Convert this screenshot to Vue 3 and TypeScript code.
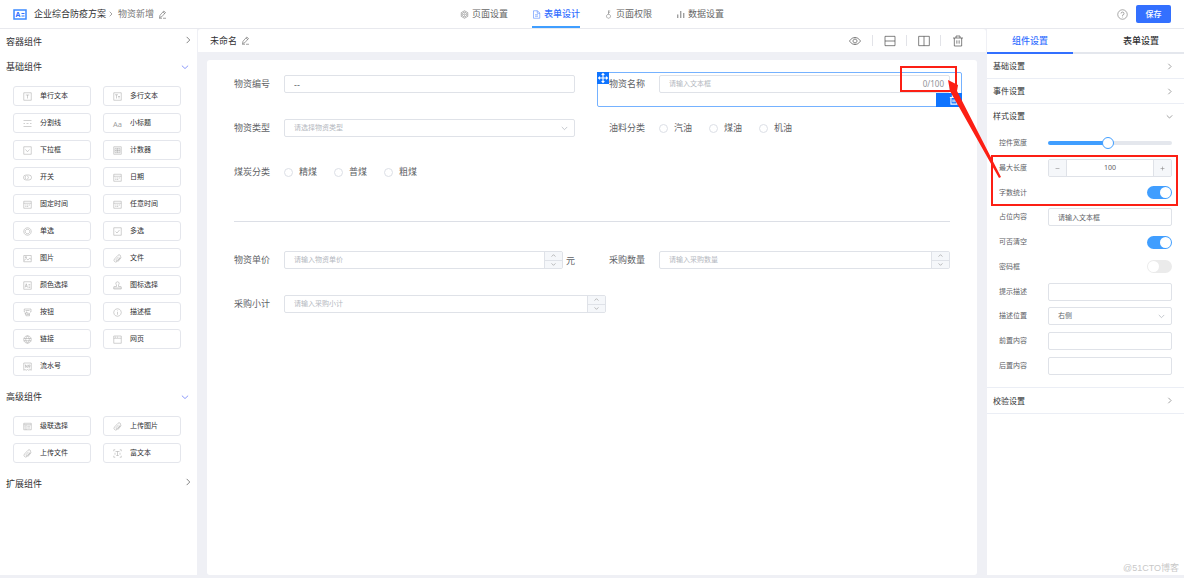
<script setup lang="ts">
import { ref } from 'vue'

interface Glyph { d: string; text?: string; x?: number; y?: number; size?: number }
interface Item { label: string; icon: string }
interface Group { title: string; open: boolean; items: Item[] }

const frame = 'M1.5 1.5h15v15h-15z'
const calendar = 'M1.5 2.5h15v14h-15zM1.5 6.5h15M4.5 10h2.5M8 10h2.5M11.500 10h2.500M4.500 13h2.500M8 13h2.500'
const clip = 'M14.500 7.500l-6.500 7.500a3.500 3.500 0 0 1-5-5l7-7.500a2.700 2.700 0 0 1 4.500 4l-6 6.500a1.400 1.400 0 0 1-2.300-2l5-5.500M16.500 7l-7 8.500'

const glyphs: Record<string, Glyph> = {
  input: { d: frame + 'M5.500 6h7M9 6v7' },
  textarea: { d: frame + 'M4 5.500h6M7 5.500v7.500M10 9h4M12 9v4' },
  divider: { d: 'M1 3h16M1 9h3M7 9h4M14 9h3M1 15h16' },
  heading: { d: '', text: 'Aa', x: 0, y: 15, size: 15 },
  select: { d: frame + 'M5 7l4 4.500 4-4.500' },
  counter: { d: frame + 'M4 4.500h10v9h-10zM4 9h10M9 4.500v9M6 6.800h1.500M11 6.800h1.500M6 11.300h1.500M11 11.300h1.500' },
  toggle: { d: 'M6 4h6a5 5 0 0 1 0 10h-6a5 5 0 0 1 0-10zM9 5.500a5 5 0 0 1 0 7M6.500 5.500a4 4 0 0 0 0 7' },
  calendar: { d: calendar },
  radio: { d: 'M9 1.500a7.500 7.500 0 1 0 .01 0zM9 4.500a4.500 4.500 0 1 0 .01 0z' },
  check: { d: frame + 'M5 9l3 3 5-6' },
  image: { d: 'M1.500 3h15v12.500h-15zM2 13l4.500-4 3.500 3 3-3.500 3.500 2M4.500 5.500h2.500v1.500h-2.500z' },
  clip: { d: clip },
  color: { d: frame + 'M4 13l2.500-7.500 2.500 7.500M5 10.500h3M11 7h3.500M11 10h3.500M11 13h3.500' },
  stamp: { d: 'M9 1.500a3.500 3.500 0 0 1 2 6.300v3.200h4.500q1 0 1 1v4h-15v-4q0-1 1-1h4.500v-3.200a3.500 3.500 0 0 1 2-6.300M1.500 14h15' },
  button: { d: 'M4 8h-1.500v-6h13.500v6h-2M5 5h8M6 15.500l-2-5 2 .8v-3.300h2v2.500h5v5zM6.500 13h6' },
  info: { d: 'M9 1.500a7.500 7.500 0 1 0 .01 0zM9 5v1.500M9 8v5.500' },
  globe: { d: 'M9 1.500a7.500 7.500 0 1 0 .01 0zM1.500 7h15M1.500 11.500h15M9 1.500q-7 7.500 0 15q7-7.500 0-15' },
  page: { d: 'M1.500 2h15v14.500h-15zM1.500 6.500h15M4 4.300h2M8 4.300h2' },
  serial: { d: 'M1.500 16.500v-14.500h15v14.500l-2.500-1.500-2.500 1.500-2.500-1.500-2.500 1.500-2.500-1.500zM5 11.500v-6l3.500 6v-6M11 6h3v3h-3zM11 11.500h3' },
  cascade: { d: 'M1.500 2.500h15v13h-15zM1.500 5.500h15M6 5.500v10M8.500 8.500h5.500M8.500 12h5.500M3 8.500h1.500M3 12h1.500' },
  rich: { d: 'M1.500 4.500v-3h3M13.500 1.500h3v3M16.500 13.500v3h-3M4.500 16.500h-3v-3M5 5h8M9 5v8M6.500 13h5M4 7.500v4M14 7.500v4' }
}

const groups = ref<Group[]>([
  { title: '容器组件', open: false, items: [] },
  {
    title: '基础组件', open: true, items: [
      { label: '单行文本', icon: 'input' }, { label: '多行文本', icon: 'textarea' },
      { label: '分割线', icon: 'divider' }, { label: '小标题', icon: 'heading' },
      { label: '下拉框', icon: 'select' }, { label: '计数器', icon: 'counter' },
      { label: '开关', icon: 'toggle' }, { label: '日期', icon: 'calendar' },
      { label: '固定时间', icon: 'calendar' }, { label: '任意时间', icon: 'calendar' },
      { label: '单选', icon: 'radio' }, { label: '多选', icon: 'check' },
      { label: '图片', icon: 'image' }, { label: '文件', icon: 'clip' },
      { label: '颜色选择', icon: 'color' }, { label: '图标选择', icon: 'stamp' },
      { label: '按钮', icon: 'button' }, { label: '描述框', icon: 'info' },
      { label: '链接', icon: 'globe' }, { label: '网页', icon: 'page' },
      { label: '流水号', icon: 'serial' }
    ]
  },
  {
    title: '高级组件', open: true, items: [
      { label: '级联选择', icon: 'cascade' }, { label: '上传图片', icon: 'clip' },
      { label: '上传文件', icon: 'clip' }, { label: '富文本', icon: 'rich' }
    ]
  },
  { title: '扩展组件', open: false, items: [] }
])

const navs = [
  { label: '页面设置', d: 'M9 1.500l6.500 3.700v7.600l-6.500 3.700-6.500-3.700v-7.600zM9 4.500a4.500 4.500 0 1 0 .01 0zM9 7.500a1.500 1.500 0 1 0 .01 0z' },
  { label: '表单设计', d: 'M3 1.500h8l4.500 4.500v10.500h-12.500zM10.500 1.500v5h5M6 9.500h6M6 12.500h6' },
  { label: '页面权限', d: 'M9 8.500a4 4 0 1 0 .01 0zM9 8.500v-7.500M9 2h3.500M9 5h2.500' },
  { label: '数据设置', d: 'M3 16v-7M4 16v-7M9 16v-14M10 16v-14M15 16v-10M16 16v-10' }
]
const pencil = 'M4 10.500l7.500-8.500 3.500 3-7.500 8.500-4.500 1.500zM10 4l3.500 3M2 16.500h6M10 16.500h6'
const trash = 'M1.500 4.500h15M6 4.500v-3h6v3M3.500 4.500v12h11v-12M7.300 8v5M10.700 8v5'
const tools = [
  { name: '预览', d: 'M.5 9q8.500-11 17 0q-8.500 11-17 0zM9 6a3 3 0 1 0 .01 0z' },
  { name: '上下布局', d: 'M1.500 2h15v14h-15zM1.500 9h15' },
  { name: '左右布局', d: 'M1 2h16v14h-16zM9 2v14' },
  { name: '清空', d: trash }
]

const width = ref(48)
const maxLength = ref(100)
const placeholder = ref('请输入文本框')
const showCount = ref(true)
const clearable = ref(true)
const password = ref(false)
const oils = ['汽油', '煤油', '机油']
const coals = ['精煤', '普煤', '粗煤']
</script>

<template>
  <div class="app">
    <header class="top">
      <div class="crumbs">
        <svg class="logo" viewBox="0 0 14 11"><rect x="1" y="1" width="12" height="9" fill="#fff" stroke="#3d8bff" stroke-width="1.500" /><text x="2.500" y="8" font-size="7" font-weight="700" fill="#3370ff">A</text><path d="M8.500 4.500h3M8.500 7h3" stroke="#3370ff" /></svg>
        <span class="name">企业综合防疫方案</span>
        <svg class="ico tiny" viewBox="0 0 18 18"><path d="M5 2l7 7-7 7" /></svg>
        <span class="page">物资新增</span>
        <svg class="ico pen" viewBox="0 0 18 18"><path :d="pencil" /></svg>
      </div>
      <nav class="nav">
        <a v-for="(n, i) in navs" :key="n.label" href="#" :class="{ on: i === 1 }">
          <svg class="ico" viewBox="0 0 18 18"><path :d="n.d" /></svg>{{ n.label }}
        </a>
      </nav>
      <div class="acts">
        <svg class="ico help" viewBox="0 0 22 22"><circle cx="11" cy="11" r="9.500" /><path d="M8 9a3 3 0 1 1 3 3.200v1.300M11 15.300v1.500" /></svg>
        <button class="save" type="button">保存</button>
      </div>
    </header>

    <div class="body">
      <aside class="side">
        <section v-for="g in groups" :key="g.title">
          <button class="head" :class="{ open: g.open }" type="button" @click="g.open = !g.open">
            <span>{{ g.title }}</span>
            <svg class="ico" viewBox="0 0 18 18"><path :d="g.open ? 'M2 6l7 6.500 7-6.500' : 'M6 2l7 7-7 7'" /></svg>
          </button>
          <div v-if="g.open" class="items">
            <button v-for="it in g.items" :key="it.label" class="item" type="button">
              <svg class="ico" viewBox="0 0 18 18">
                <path :d="glyphs[it.icon].d" />
                <text v-if="glyphs[it.icon].text" :x="glyphs[it.icon].x" :y="glyphs[it.icon].y" :font-size="glyphs[it.icon].size">{{ glyphs[it.icon].text }}</text>
              </svg>
              {{ it.label }}
            </button>
          </div>
        </section>
      </aside>

      <main class="main">
        <div class="bar">
          <span>未命名</span>
          <svg class="ico pen" viewBox="0 0 18 18"><path :d="pencil" /></svg>
          <div class="tools">
            <button v-for="t in tools" :key="t.name" type="button" :aria-label="t.name">
              <svg class="ico" viewBox="0 0 18 18"><path :d="t.d" /></svg>
            </button>
          </div>
        </div>

        <form class="canvas" @submit.prevent>
          <div class="field">
            <label for="code">物资编号</label>
            <input id="code" class="box code" value="--">
          </div>
          <div class="field chosen">
            <label for="title">物资名称</label>
            <div class="box counted">
              <input id="title" :placeholder="placeholder" :maxlength="maxLength">
              <span>0/100</span>
            </div>
            <span class="grip"><svg class="ico" viewBox="0 0 18 18"><path d="M9 1v16M1 9h16M6.500 3.500l2.500-2.500 2.500 2.500M6.500 14.500l2.500 2.500 2.500-2.500M3.500 6.500l-2.500 2.500 2.500 2.500M14.500 6.500l2.500 2.500-2.500 2.500" /></svg></span>
            <button class="remove" type="button" aria-label="删除"><svg class="ico" viewBox="0 0 18 18"><path :d="trash" /></svg></button>
          </div>
          <div class="field">
            <label for="kind">物资类型</label>
            <div class="pick">
              <select id="kind" class="box empty"><option>请选择物资类型</option></select>
              <svg class="ico" viewBox="0 0 18 18"><path d="M2 5l7 7 7-7" /></svg>
            </div>
          </div>
          <div class="field" role="radiogroup" aria-labelledby="oil">
            <span id="oil" class="label">油料分类</span>
            <div class="radios"><label v-for="o in oils" :key="o"><input type="radio" name="oil" :value="o">{{ o }}</label></div>
          </div>
          <div class="field wide" role="radiogroup" aria-labelledby="coal">
            <span id="coal" class="label">煤炭分类</span>
            <div class="radios"><label v-for="c in coals" :key="c"><input type="radio" name="coal" :value="c">{{ c }}</label></div>
          </div>
          <div class="field wide rule"><hr></div>
          <div class="field">
            <label for="price">物资单价</label>
            <div class="box spin">
              <input id="price" placeholder="请输入物资单价">
              <div class="steps">
                <button type="button" aria-label="增加"><svg class="ico" viewBox="0 0 18 18"><path d="M2 13l7-7 7 7" /></svg></button>
                <button type="button" aria-label="减少"><svg class="ico" viewBox="0 0 18 18"><path d="M2 5l7 7 7-7" /></svg></button>
              </div>
            </div>
            <span class="unit">元</span>
          </div>
          <div class="field">
            <label for="amount">采购数量</label>
            <div class="box spin">
              <input id="amount" placeholder="请输入采购数量">
              <div class="steps">
                <button type="button" aria-label="增加"><svg class="ico" viewBox="0 0 18 18"><path d="M2 13l7-7 7 7" /></svg></button>
                <button type="button" aria-label="减少"><svg class="ico" viewBox="0 0 18 18"><path d="M2 5l7 7 7-7" /></svg></button>
              </div>
            </div>
          </div>
          <div class="field wide">
            <label for="sum">采购小计</label>
            <div class="box spin half">
              <input id="sum" placeholder="请输入采购小计">
              <div class="steps">
                <button type="button" aria-label="增加"><svg class="ico" viewBox="0 0 18 18"><path d="M2 13l7-7 7 7" /></svg></button>
                <button type="button" aria-label="减少"><svg class="ico" viewBox="0 0 18 18"><path d="M2 5l7 7 7-7" /></svg></button>
              </div>
            </div>
          </div>
        </form>
      </main>

      <aside class="panel">
        <div class="tabs" role="tablist">
          <button class="on" type="button" role="tab" aria-selected="true">组件设置</button>
          <button type="button" role="tab" aria-selected="false">表单设置</button>
        </div>
        <button class="fold" type="button">基础设置<svg class="ico" viewBox="0 0 18 18"><path d="M6 2l7 7-7 7" /></svg></button>
        <button class="fold" type="button">事件设置<svg class="ico" viewBox="0 0 18 18"><path d="M6 2l7 7-7 7" /></svg></button>
        <button class="fold open" type="button">样式设置<svg class="ico" viewBox="0 0 18 18"><path d="M2 6l7 7 7-7" /></svg></button>
        <div class="props">
          <div class="prop"><label for="p-width">控件宽度</label><input id="p-width" v-model="width" class="slider" type="range" :style="{ '--fill': width + '%' }"></div>
          <div class="prop">
            <label for="p-max">最大长度</label>
            <div class="box number">
              <button type="button" aria-label="减少" @click="maxLength--"><svg class="ico" viewBox="0 0 18 18"><path d="M2 9h14" /></svg></button>
              <input id="p-max" v-model="maxLength">
              <button type="button" aria-label="增加" @click="maxLength++"><svg class="ico" viewBox="0 0 18 18"><path d="M2 9h14M9 2v14" /></svg></button>
            </div>
          </div>
          <div class="prop"><label for="p-count">字数统计</label><input id="p-count" v-model="showCount" class="switch" type="checkbox" role="switch"></div>
          <div class="prop"><label for="p-hold">占位内容</label><input id="p-hold" v-model="placeholder" class="box"></div>
          <div class="prop"><label for="p-clear">可否清空</label><input id="p-clear" v-model="clearable" class="switch" type="checkbox" role="switch"></div>
          <div class="prop"><label for="p-pass">密码框</label><input id="p-pass" v-model="password" class="switch" type="checkbox" role="switch"></div>
          <div class="prop"><label for="p-tip">提示描述</label><input id="p-tip" class="box"></div>
          <div class="prop">
            <label for="p-pos">描述位置</label>
            <div class="pick">
              <select id="p-pos" class="box"><option>右侧</option></select>
              <svg class="ico" viewBox="0 0 18 18"><path d="M2 5l7 7 7-7" /></svg>
            </div>
          </div>
          <div class="prop"><label for="p-pre">前置内容</label><input id="p-pre" class="box"></div>
          <div class="prop"><label for="p-post">后置内容</label><input id="p-post" class="box"></div>
        </div>
        <button class="fold last" type="button">校验设置<svg class="ico" viewBox="0 0 18 18"><path d="M6 2l7 7-7 7" /></svg></button>
        <div class="mark">@51CTO博客</div>
      </aside>
    </div>

    <svg class="notes" viewBox="894 60 290 150" aria-hidden="true">
      <rect x="901" y="67" width="55" height="24" />
      <rect x="992" y="156" width="185" height="49" />
      <path d="M948 80l10 5-1 6 44 86-2 1-49-87z" />
    </svg>
  </div>
</template>

<style>
body { background: #eff0f5; }
</style>

<style scoped>
.app {
  position: relative;
  display: flex;
  flex-direction: column;
  min-height: 100vh;
  box-sizing: border-box;
  padding-bottom: 3px;
  background: #eff0f5;
  color: #303133;
  font: 9px/12px "Noto Sans", "Noto Sans CJK SC", sans-serif;
}
.app *, .app *::before { box-sizing: border-box; }
button, input, select { font: inherit; color: inherit; margin: 0; padding: 0; border: 0; background: none; outline: 0; min-width: 0; }
button { cursor: pointer; display: flex; align-items: center; }
a { color: inherit; text-decoration: none; }
.ico { width: 9px; height: 9px; flex: none; fill: none; stroke: currentColor; stroke-width: 2; overflow: visible; }

.top { display: grid; grid-template-columns: 1fr auto 1fr; align-items: center; height: 29px; padding: 0 13px; background: #fff; border-bottom: 1px solid #e8e9ee; }
.crumbs { display: flex; align-items: center; }
.logo { width: 14px; height: 11px; margin-right: 7px; }
.tiny { width: 6px; height: 8px; margin: 0 4px 0 2px; color: #777; }
.page { color: #777; }
.pen { margin-left: 4px; color: #444; stroke-width: 1; }
.nav { display: flex; gap: 24px; height: 28px; color: #666; }
.nav a { display: flex; align-items: center; gap: 3px; border-bottom: 2px solid transparent; padding-top: 2px; }
.nav .ico { stroke-width: 1; }
.nav .on { color: #3370ff; border-color: #409eff; font-weight: 500; }
.acts { display: flex; align-items: center; justify-content: flex-end; gap: 8px; }
.help { width: 11px; height: 11px; color: #555; stroke-width: 1; }
.save { justify-content: center; width: 35px; height: 18px; border-radius: 2px; background: #3370ff; color: #fff; font-size: 8px; font-weight: 500; }

.body { flex: 1; display: grid; grid-template-columns: 197px minmax(0, 1fr) 197px; }
.side { background: #fff; }
.head { width: 100%; height: 25px; justify-content: space-between; padding: 0 5px 0 6px; }
.head .ico { width: 8px; height: 8px; color: #777; margin-bottom: 4px; }
.head.open { padding-right: 8px; }
.head.open .ico { color: #7d8cf8; margin: 0; }
.items { display: grid; grid-template-columns: 1fr 1fr; gap: 7px 12px; padding: 7px 16px 8px 13px; }
.item { height: 20px; gap: 8px; padding-left: 9px; border: 1px solid #e4e6ec; border-radius: 3px; font-size: 7px; }
.item .ico { color: #a0a0a0; stroke-width: 1; }
.item text { fill: #a0a0a0; stroke: none; }

.main { display: flex; flex-direction: column; padding-left: 1px; }
.bar { display: flex; align-items: center; height: 23px; padding: 0 21px 0 12px; margin-right: 1px; background: #fff; border-radius: 3px 3px 0 0; }
.tools { display: flex; margin-left: auto; color: #444; }
.tools button { justify-content: center; width: 34px; height: 11px; border-left: 1px solid #e2e3e8; }
.tools button:first-child { border: 0; }
.tools button:last-child { margin-right: -9px; }
.tools .ico { width: 12px; height: 12px; stroke-width: 1; }

.canvas { flex: 1; display: grid; grid-template-columns: 1fr 1fr; align-content: start; gap: 9px 10px; margin: 8px 10px 0 9px; padding: 12px 15px; background: #fff; border-radius: 3px; }
.field { position: relative; display: flex; align-items: flex-start; height: 35px; padding: 3px 12px; color: #606266; }
.wide { grid-column: 1 / -1; }
.field > label, .label { flex: none; width: 50px; line-height: 17px; }
.box { width: 100%; height: 18px; padding: 0 9px; border: 1px solid #dfe2e8; border-radius: 2px; background: #fff; font-size: 7px; color: #606266; }
.code { font-size: 9px; }
input::placeholder { color: #b4b8c0; opacity: 1; }
.field .box { flex: 1; }
.chosen::before { content: ""; position: absolute; inset: 0; border: 1px solid #75b2ff; border-radius: 2px; pointer-events: none; }
.counted { display: flex; align-items: center; padding-right: 5px; }
.counted input { flex: 1; }
.counted span { font-size: 8px; color: #909399; }
.grip { position: absolute; left: 0; top: 0; display: flex; align-items: center; justify-content: center; width: 12px; height: 12px; background: #0f74ff; color: #fff; }
.grip .ico { width: 10px; height: 10px; }
.remove { position: absolute; right: 0; bottom: 0; width: 26px; height: 14px; padding-left: 13px; background: #0f74ff; color: #fff; }
.remove .ico { width: 10px; height: 10px; }
.pick { position: relative; flex: 1; display: flex; }
.pick select { appearance: none; }
.pick .ico { position: absolute; right: 7px; top: 6px; width: 7px; height: 7px; color: #b4b8c0; pointer-events: none; }
.pick .empty { color: #b4b8c0; }
.radios { display: flex; gap: 17px; }
.radios label { display: flex; align-items: center; gap: 6px; height: 18px; }
.radios input { appearance: none; width: 9px; height: 9px; border: 1px solid #dcdfe6; border-radius: 50%; }
.rule { align-items: center; }
hr { flex: 1; margin: 0; border: 0; border-top: 1px solid #dcdfe6; }
.spin { display: flex; padding-right: 0; overflow: hidden; }
.spin input { flex: 1; }
.steps { display: flex; flex-direction: column; width: 18px; border-left: 1px solid #dfe2e8; background: #f5f7fa; }
.steps button { flex: 1; justify-content: center; }
.steps button + button { border-top: 1px solid #dfe2e8; }
.steps .ico { width: 5px; height: 5px; color: #888; }
.unit { width: 12px; text-align: right; line-height: 19px; }
.field .half { max-width: 322px; }

.panel { display: flex; flex-direction: column; background: #fff; }
.tabs { display: flex; justify-content: space-between; height: 25px; border-bottom: 2px solid #e4e7ed; }
.tabs button { justify-content: center; height: 25px; padding: 0 25px; border-bottom: 2px solid transparent; font-weight: 500; }
.tabs .on { color: #3370ff; border-color: #3370ff; }
.fold { flex: none; justify-content: space-between; height: 25px; padding: 0 11px 0 6px; border-bottom: 1px solid #ebeef5; font-size: 8px; }
.fold .ico { width: 7px; height: 7px; color: #888; }
.fold.open { border-color: transparent; }
.props { display: grid; grid-template-columns: minmax(0, 1fr); grid-template-rows: repeat(10, 1fr); min-height: 247px; margin-top: 2px; padding: 0 12px; color: #606266; font-size: 7px; }
.prop { display: flex; align-items: center; }
.prop label { flex: none; width: 49px; }
.slider { appearance: none; flex: 1; height: 12px; }
.slider::-webkit-slider-runnable-track { height: 4px; border-radius: 2px; background: linear-gradient(to right, #409eff var(--fill), #e4e7ed var(--fill)); }
.slider::-webkit-slider-thumb { appearance: none; width: 12px; height: 12px; margin-top: -4px; border: 1px solid #409eff; border-radius: 50%; background: #fff; }
.number { display: flex; padding: 0; overflow: hidden; }
.number input { flex: 1; text-align: center; }
.number button { flex: none; width: 18px; justify-content: center; background: #f5f7fa; border-right: 1px solid #dfe2e8; }
.number button:last-child { border-right: 0; border-left: 1px solid #dfe2e8; }
.number .ico { width: 5px; height: 5px; color: #888; }
.switch { appearance: none; display: flex; align-items: center; width: 25px; height: 13px; padding: 1px; margin-left: auto; border-radius: 7px; background: #ebebeb; }
.switch::before { content: ""; width: 11px; height: 11px; border-radius: 50%; background: #fff; }
.switch:checked { background: #409eff; justify-content: flex-end; }
.last { height: 27px; margin-top: 9px; border-top: 1px solid #ebeef5; }
.mark { margin: auto 5px 1px auto; color: #c8c8c8; font-family: "Liberation Sans", "Noto Sans CJK SC", sans-serif; }

.notes { position: absolute; top: 60px; right: 0; width: 290px; height: 150px; pointer-events: none; }
.notes rect { fill: none; stroke: #fc1f14; stroke-width: 2; }
.notes path { fill: #fc1f14; }
</style>
